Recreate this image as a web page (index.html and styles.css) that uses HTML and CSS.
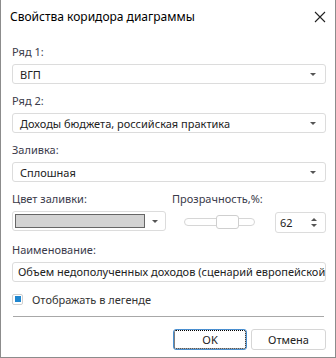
FILE: index.html
```html
<!DOCTYPE html>
<html lang="ru">
<head>
  <meta charset="UTF-8">
  <title>Свойства коридора диаграммы</title>
  <link rel="stylesheet" href="styles.css">
</head>
<body>
  <div class="dialog">
    <div class="titlebar">
      <span class="title">Свойства коридора диаграммы</span>
      <svg class="close" width="12" height="12" viewBox="0 0 12 12">
        <path d="M1 1L11 11M11 1L1 11" stroke="#222" stroke-width="1.1"/>
      </svg>
    </div>

    <div class="content">
      <div class="field first">
        <div class="label">Ряд 1:</div>
        <div class="select">
          <span class="value">ВГП</span>
          <span class="arrow"></span>
        </div>
      </div>

      <div class="field">
        <div class="label">Ряд 2:</div>
        <div class="select">
          <span class="value">Доходы бюджета, российская практика</span>
          <span class="arrow"></span>
        </div>
      </div>

      <div class="field">
        <div class="label">Заливка:</div>
        <div class="select">
          <span class="value">Сплошная</span>
          <span class="arrow"></span>
        </div>
      </div>

      <div class="field row">
        <div class="col-color">
          <div class="label">Цвет заливки:</div>
          <div class="select color-picker">
            <span class="swatch"></span>
            <span class="arrow"></span>
          </div>
        </div>
        <div class="col-opacity">
          <div class="label">Прозрачность,%:</div>
          <div class="opacity-controls">
            <div class="slider">
              <div class="track"></div>
              <div class="thumb"></div>
            </div>
            <div class="spin">
              <span>62</span>
              <span class="spin-arrows">
                <span class="up"></span>
                <span class="down"></span>
              </span>
            </div>
          </div>
        </div>
      </div>

      <div class="field">
        <div class="label">Наименование:</div>
        <div class="input">Объем недополученных доходов (сценарий европейской практики)</div>
      </div>

      <div class="checkbox-row">
        <span class="checkbox"><span class="check-fill"></span></span>
        <span class="check-label">Отображать в легенде</span>
      </div>

      <div class="separator"></div>

      <div class="buttons">
        <button class="btn btn-ok">OK</button>
        <button class="btn">Отмена</button>
      </div>
    </div>
  </div>
</body>
</html>
```

FILE: styles.css
```css
body {
  margin: 0;
  background: #fff;
  font-family: "Noto Sans", "Open Sans", sans-serif;
  font-size: 11px;
  color: #333;
}

.dialog {
  width: 336px;
  height: 358px;
  box-sizing: border-box;
  border: 1px solid #8c8c8c;
  border-top: none;
  background: #fff;
  display: flex;
  flex-direction: column;
}

.titlebar {
  height: 32px;
  display: flex;
  align-items: center;
  justify-content: space-between;
  padding: 0 9px 0 9px;
}

.title {
  font-size: 12px;
  color: #000;
}

.close {
  display: block;
  margin-top: 1px;
}

.content {
  padding: 12px 9px 0 11px;
}

.field {
  margin-top: 9px;
}

.field.first {
  margin-top: 0;
}

.label {
  height: 16px;
  line-height: 16px;
  margin-bottom: 4px;
  color: #3a3a4a;
}

.select {
  height: 20px;
  box-sizing: border-box;
  border: 1px solid #dcdcdc;
  border-radius: 3px;
  display: flex;
  align-items: center;
  justify-content: space-between;
  padding: 0 9px 0 7px;
}

.value {
  color: #222;
}

.arrow {
  width: 0;
  height: 0;
  border-left: 3px solid transparent;
  border-right: 3px solid transparent;
  border-top: 3px solid #555;
}

.row {
  display: flex;
  justify-content: space-between;
}

.col-color {
  width: 154px;
}

.color-picker {
  padding: 0 7px 0 2px;
}

.swatch {
  width: 130px;
  height: 14px;
  box-sizing: border-box;
  background: #d3d3d3;
  border: 1px solid #666;
}

.col-opacity {
  width: 154px;
}

.opacity-controls {
  display: flex;
  align-items: center;
  justify-content: space-between;
  height: 22px;
  padding-left: 12px;
  margin-top: 1px;
}

.slider {
  position: relative;
  width: 71px;
  height: 14px;
}

.track {
  margin-top: 3px;
  height: 8px;
  box-sizing: border-box;
  border: 1px solid #d6d6d6;
  border-radius: 4px;
}

.thumb {
  position: absolute;
  left: 32px;
  top: 0;
  width: 23px;
  height: 14px;
  box-sizing: border-box;
  background: #fff;
  border: 1px solid #cfcfcf;
  border-radius: 3px;
}

.spin {
  width: 51px;
  height: 21px;
  box-sizing: border-box;
  border: 1px solid #dcdcdc;
  border-radius: 3px;
  display: flex;
  align-items: center;
  justify-content: space-between;
  padding: 0 8px 0 4px;
  color: #222;
}

.spin-arrows {
  display: flex;
  flex-direction: column;
  gap: 3px;
}

.spin-arrows .up {
  width: 0;
  height: 0;
  border-left: 3px solid transparent;
  border-right: 3px solid transparent;
  border-bottom: 3px solid #555;
}

.spin-arrows .down {
  width: 0;
  height: 0;
  border-left: 3px solid transparent;
  border-right: 3px solid transparent;
  border-top: 3px solid #555;
}

.input {
  height: 20px;
  line-height: 18px;
  box-sizing: border-box;
  border: 1px solid #dcdcdc;
  border-radius: 3px;
  padding: 0 0 0 5px;
  white-space: nowrap;
  overflow: hidden;
  color: #222;
}

.checkbox-row {
  display: flex;
  align-items: center;
  margin-top: 10px;
  height: 14px;
}

.checkbox {
  width: 11px;
  height: 11px;
  box-sizing: border-box;
  border: 1px solid #d0d0d0;
  border-radius: 2px;
  display: flex;
  align-items: center;
  justify-content: center;
}

.check-fill {
  width: 6px;
  height: 6px;
  background: #1f86cf;
}

.check-label {
  margin-left: 9px;
  color: #333;
}

.separator {
  height: 1px;
  background: #a8a8a8;
  margin: 10px 2px 0 1px;
}

.buttons {
  display: flex;
  justify-content: flex-end;
  gap: 4px;
  margin-top: 12px;
}

.btn {
  width: 75px;
  height: 21px;
  box-sizing: border-box;
  border: 1px solid #d6d6d6;
  border-radius: 3px;
  background: #fff;
  font-family: "Noto Sans", "Open Sans", sans-serif;
  font-size: 11px;
  color: #222;
  padding: 0;
}

.btn-ok {
  width: 74px;
  border-color: #4a8fd0;
  outline: 1px dotted #000;
  outline-offset: -2px;
}
```
